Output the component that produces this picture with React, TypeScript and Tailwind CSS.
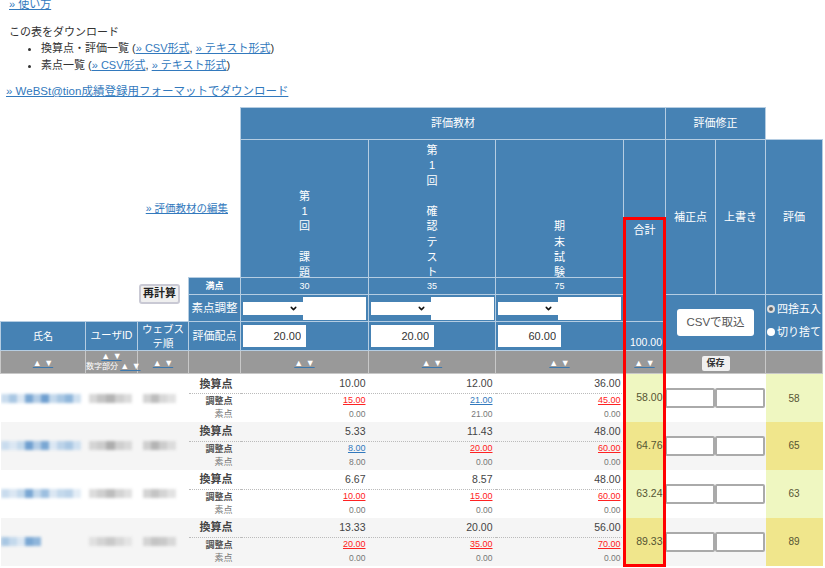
import { ChevronDown } from "lucide-react";

const headCell = "border border-[#b5cde2] bg-[#4682b4] text-center text-white p-0";
const sortCell = "border border-[#c8c8c8] bg-[#999999] text-center p-0";
const linkClass = "text-[#3279bd] underline";

const items = [
  { chars: ["第", "1", "回", "\u00a0", "課", "題"], full: 30, weight: "20.00" },
  { chars: ["第", "1", "回", "\u00a0", "確", "認", "テ", "ス", "ト"], full: 35, weight: "20.00" },
  { chars: ["期", "末", "試", "験"], full: 75, weight: "60.00" },
];

type Row = {
  conv: string[];
  adj: [string, boolean][];
  raw: string[];
  total: string;
  grade: string;
  name: string[];
  id: string[];
  web: string[];
};

const rows: Row[] = [
  {
    conv: ["10.00", "12.00", "36.00"],
    adj: [["15.00", true], ["21.00", false], ["45.00", true]],
    raw: ["0.00", "21.00", "0.00"],
    total: "58.00",
    grade: "58",
    name: ["#c9dcee", "#a9c7e3", "#dbe7f3", "#7aa7d3", "#b4cde6", "#6f9fd0", "#c4d9ec", "#a9c7e3", "#8fb6db", "#cfe0f0"],
    id: ["#d8d8d8", "#c4c4c4", "#b4b4b4", "#d0d0d0", "#dcdcdc"],
    web: ["#d4d4d4", "#bdbdbd", "#d8d8d8", "#e2e2e2"],
  },
  {
    conv: ["5.33", "11.43", "48.00"],
    adj: [["8.00", false], ["20.00", true], ["60.00", true]],
    raw: ["8.00", "0.00", "0.00"],
    total: "64.76",
    grade: "65",
    name: ["#c9dcee", "#dbe7f3", "#c4d9ec", "#6f9fd0", "#b4cde6", "#7aa7d3", "#dbe7f3", "#bcd3e9", "#a9c7e3", "#cfe0f0"],
    id: ["#d4d4d4", "#cccccc", "#adadad", "#cfcfcf", "#d8d8d8"],
    web: ["#cfcfcf", "#b4b4b4", "#cccccc", "#dcdcdc"],
  },
  {
    conv: ["6.67", "8.57", "48.00"],
    adj: [["10.00", true], ["15.00", true], ["60.00", true]],
    raw: ["0.00", "0.00", "0.00"],
    total: "63.24",
    grade: "63",
    name: ["#c9dcee", "#dbe7f3", "#c4d9ec", "#7aa7d3", "#c4d9ec", "#9dbfe0", "#dbe7f3", "#c4d9ec", "#bcd3e9", "#e3edf6"],
    id: ["#dcdcdc", "#cfcfcf", "#bdbdbd", "#d4d4d4", "#e0e0e0"],
    web: ["#d4d4d4", "#c4c4c4", "#d4d4d4", "#e2e2e2"],
  },
  {
    conv: ["13.33", "20.00", "56.00"],
    adj: [["20.00", true], ["35.00", true], ["70.00", true]],
    raw: ["0.00", "0.00", "0.00"],
    total: "89.33",
    grade: "89",
    name: ["#a9c7e3", "#c4d9ec", "#dbe7f3", "#7aa7d3", "#8fb6db"],
    id: ["#e0e0e0", "#d4d4d4", "#c9c9c9", "#d8d8d8", "#e4e4e4"],
    web: ["#d4d4d4", "#c4c4c4", "#c9c9c9", "#d8d8d8"],
  },
];

function Sort() {
  return (
    <span className="text-[9px] leading-none text-white underline decoration-[#3d78ad]">
      ▲ ▼
    </span>
  );
}

function Blur({ colors, width }: { colors: string[]; width: number }) {
  return (
    <div className="flex h-[9px] blur-[1.5px]" style={{ width }}>
      {colors.map((color, i) => (
        <span key={i} className="h-full flex-1" style={{ backgroundColor: color }} />
      ))}
    </div>
  );
}

export default function App() {
  return (
    <div className="h-[568px] w-[825px] overflow-hidden bg-white font-['Liberation_Sans','Noto_Sans_CJK_JP',sans-serif] text-[11px] text-[#333333]">
      <div className="h-[107px]">
        <a className={`ml-[9px] block h-[24px] -translate-y-[4px] leading-[16px] ${linkClass}`}>» 使い方</a>
        <p className="ml-[9px] leading-[16px]">この表をダウンロード</p>
        <ul className="ml-[41px] list-disc leading-[17px]">
          <li>
            換算点・評価一覧 (<a className={linkClass}>» CSV形式</a>, <a className={linkClass}>» テキスト形式</a>)
          </li>
          <li>
            素点一覧 (<a className={linkClass}>» CSV形式</a>, <a className={linkClass}>» テキスト形式</a>)
          </li>
        </ul>
        <a className={`ml-[6px] mt-[9px] block text-[11.5px] leading-[16px] ${linkClass}`}>» WeBSt@tion成績登録用フォーマットでダウンロード</a>
      </div>

      <div className="relative w-[823px]">
        <table className="w-[822px] table-fixed border-collapse">
          <colgroup>
            <col className="w-[85px]" />
            <col className="w-[52px]" />
            <col className="w-[51px]" />
            <col className="w-[52px]" />
            <col className="w-[128px]" />
            <col className="w-[127px]" />
            <col className="w-[128px]" />
            <col className="w-[42px]" />
            <col className="w-[50px]" />
            <col className="w-[50px]" />
            <col className="w-[57px]" />
          </colgroup>
          <tbody>
            <tr className="h-[32px] text-[11px]">
              <td colSpan={4} />
              <td colSpan={4} className={headCell}>評価教材</td>
              <td colSpan={2} className={headCell}>評価修正</td>
              <td />
            </tr>
            <tr className="h-[138px] text-[11px]">
              <td colSpan={4} className="pr-[12px] text-right">
                <a className={`text-[10.5px] ${linkClass}`}>» 評価教材の編集</a>
              </td>
              {items.map((item, i) => (
                <td key={i} className={`${headCell} align-bottom`}>
                  <div className="translate-y-[3px]">
                    {item.chars.map((c, j) => (
                      <div key={j} className="h-[15.25px] leading-[15.25px]">{c}</div>
                    ))}
                  </div>
                </td>
              ))}
              <td rowSpan={3} className={headCell}>合計</td>
              <td rowSpan={2} className={headCell}>補正点</td>
              <td rowSpan={2} className={headCell}>上書き</td>
              <td rowSpan={2} className={headCell}>評価</td>
            </tr>
            <tr className="h-[17px] text-[9px]">
              <td colSpan={3} rowSpan={2} className="pr-[8px] pt-[6px] text-right align-top">
                <button className="h-[20px] w-[41px] rounded-[3px] border-2 border-[#c9c9d4] bg-[#efefef] text-[11px] leading-none font-bold text-[#222222]">
                  再計算
                </button>
              </td>
              <td className={`${headCell} font-bold`}>満点</td>
              {items.map((item, i) => (
                <td key={i} className={headCell}>{item.full}</td>
              ))}
            </tr>
            <tr className="h-[27px]">
              <td className={`${headCell} text-[11.5px] leading-none whitespace-nowrap`}>素点調整</td>
              {items.map((_, i) => (
                <td key={i} className={headCell}>
                  <div className="flex items-center pl-[2px]">
                    <div className="relative h-[13px] w-[60px] bg-white">
                      <select className="block h-full w-full appearance-none border-0 bg-transparent" />
                      <ChevronDown
                        size={9}
                        strokeWidth={4}
                        color="#111111"
                        className="pointer-events-none absolute top-[2px] right-[5px]"
                      />
                    </div>
                    <input className="h-[23px] w-[63px] border-0 bg-white" />
                  </div>
                </td>
              ))}
              <td colSpan={2} rowSpan={2} className={headCell}>
                <button className="h-[27px] w-[77px] rounded-[3px] bg-white text-[11.5px] text-[#555555]">CSVで取込</button>
              </td>
              <td rowSpan={2} className={`${headCell} pb-[5px] text-left text-[11px] whitespace-nowrap`}>
                <div className="flex flex-col gap-[9px] leading-[14px]">
                  <div className="flex items-center gap-[2px] pl-[1px]">
                    <span className="size-[8px] shrink-0 rounded-full border-2 border-[#dddddd] bg-[#666666]" />
                    四捨五入
                  </div>
                  <div className="flex items-center gap-[2px] pl-[1px]">
                    <span className="size-[8px] shrink-0 rounded-full bg-white" />
                    切り捨て
                  </div>
                </div>
              </td>
            </tr>
            <tr className="h-[28px] text-[10px]">
              <td className={headCell}>氏名</td>
              <td className={`${headCell} text-[10.5px]`}>ユーザID</td>
              <td className={`${headCell} text-[10.5px] leading-[14px]`}>ウェブステ順</td>
              <td className={`${headCell} text-[11px] whitespace-nowrap`}>評価配点</td>
              {items.map((item, i) => (
                <td key={i} className={headCell}>
                  <div className="pl-[2px]">
                    <input
                      readOnly
                      value={item.weight}
                      className="block h-[22px] w-[63px] border-0 bg-white pr-[5px] text-right text-[11px] text-[#333333]"
                    />
                  </div>
                </td>
              ))}
              <td className={`${headCell} pr-[3px] text-right text-[10.5px] align-bottom`}>100.00</td>
            </tr>
            <tr className="h-[23px]">
              <td className={sortCell}><Sort /></td>
              <td className={`${sortCell} text-[8px] leading-[10px] text-white`}>
                <Sort />
                <div className="whitespace-nowrap">数字部分 <Sort /></div>
              </td>
              <td className={sortCell}><Sort /></td>
              <td className={sortCell} />
              {items.map((_, i) => (
                <td key={i} className={sortCell}><Sort /></td>
              ))}
              <td className={sortCell}><Sort /></td>
              <td colSpan={2} className={sortCell}>
                <button className="h-[15px] w-[28px] rounded-[2px] bg-[#f0f0f0] text-[9px] leading-none font-bold text-[#333333]">保存</button>
              </td>
              <td className={sortCell} />
            </tr>
            {rows.map((row, r) => {
              const bg = r % 2 === 1 ? "bg-[#f5f5f5]" : "bg-white";
              const grade = r % 2 === 1 ? "bg-[#f0e68c]" : "bg-[#eff7c1]";
              return [
                <tr key={`${r}a`} className={`h-[20px] ${bg}`}>
                  <td rowSpan={3} className="overflow-hidden"><Blur colors={row.name} width={r === 3 ? 40 : 80} /></td>
                  <td rowSpan={3} className="pl-[3px]"><Blur colors={row.id} width={44} /></td>
                  <td rowSpan={3} className="pl-[5px]"><Blur colors={row.web} width={33} /></td>
                  <td className="border-b border-dotted border-[#bbbbbb] pr-[8px] text-right text-[11px] font-bold text-[#444444]">換算点</td>
                  {row.conv.map((v, i) => (
                    <td key={i} className="border-b border-dotted border-[#bbbbbb] pr-[3px] text-right text-[10.5px] text-[#444444]">{v}</td>
                  ))}
                  <td rowSpan={3} className={`${grade} pr-[3px] text-right text-[10.5px] text-[#555533]`}>{row.total}</td>
                  <td colSpan={2} rowSpan={3}>
                    <div className="-ml-[1px] flex">
                      <input className="h-[20px] w-[50px] rounded-[2px] border-2 border-[#aaaaaa] bg-white" />
                      <input className="h-[20px] w-[50px] rounded-[2px] border-2 border-[#aaaaaa] bg-white" />
                    </div>
                  </td>
                  <td rowSpan={3} className={`${grade} text-center text-[10px] text-[#555533]`}>{row.grade}</td>
                </tr>,
                <tr key={`${r}b`} className={`h-[14px] ${bg}`}>
                  <td className="pr-[8px] text-right text-[9px] leading-none font-bold text-[#555555]">調整点</td>
                  {row.adj.map(([v, red], i) => (
                    <td key={i} className="pr-[3px] pb-[2px] text-right text-[9px] leading-none">
                      <a className={red ? "text-[#ff2222] underline" : linkClass}>{v}</a>
                    </td>
                  ))}
                </tr>,
                <tr key={`${r}c`} className={`h-[14px] ${bg}`}>
                  <td className="pr-[8px] text-right text-[9px] leading-none text-[#777777]">素点</td>
                  {row.raw.map((v, i) => (
                    <td key={i} className="pr-[3px] pb-[2px] text-right text-[8.5px] leading-none text-[#777777]">{v}</td>
                  ))}
                </tr>,
              ];
            })}
          </tbody>
        </table>
        {/* 合計列の赤枠 */}
        <div className="pointer-events-none absolute top-[110px] left-[623px] h-[350px] w-[43px] border-[3px] border-[#ff0000]" />
      </div>
    </div>
  );
}
